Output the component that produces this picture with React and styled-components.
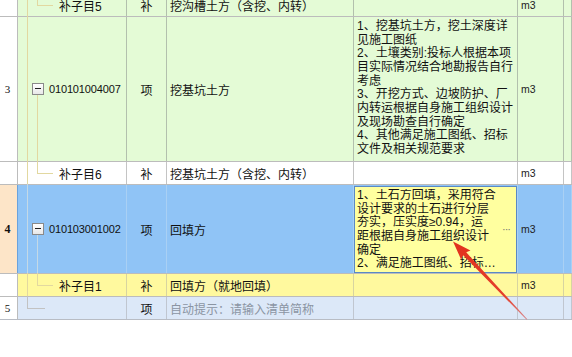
import React from "react";
import styled, { createGlobalStyle, css } from "styled-components";

const Global = createGlobalStyle`
  html, body { margin: 0; padding: 0; background: #ffffff; overflow: hidden; }
  body { width: 572px; height: 357px; }
`;

const COLS = "18px 109px 40px 187px 164px 46px 8px";

const palette = {
  green: { bg: "#e4fbd6", line: "#b2c0ad" },
  white: { bg: "#ffffff", line: "#c4c4c4" },
  blue: { bg: "#90c4f6", line: "#a9d0f4" },
  yellow: { bg: "#fff99e", line: "#d8d4a0" },
  pale: { bg: "#dce8f8", line: "#c0c6d0" },
};

const Page = styled.div`
  position: relative;
  width: 572px;
  height: 357px;
  overflow: hidden;
  font-family: "Liberation Sans", "Noto Sans CJK SC", sans-serif;
  font-size: 12px;
  color: #111;
`;

const Table = styled.div`
  display: flex;
  flex-direction: column;
  margin-top: -6px;
`;

const Row = styled.div`
  display: grid;
  grid-template-columns: ${COLS};
  height: ${(p) => p.$h}px;
  box-sizing: border-box;
  border-bottom: 1px solid ${(p) => (p.$tone === "pale" ? "#b8bcc4" : "#bcbcbc")};
  background: ${(p) => palette[p.$tone].bg};
`;

const Cell = styled.div`
  position: relative;
  box-sizing: border-box;
  border-right: 1px solid ${(p) => palette[p.$tone].line};
  display: flex;
  align-items: center;
  min-width: 0;
  white-space: nowrap;
`;

const NumCell = styled(Cell)`
  justify-content: center;
  background: ${(p) => (p.$peach ? "#fde5c8" : "#ffffff")};
  border-right: 1px solid ${(p) => (p.$peach ? "#6aa2dc" : "#bcbcbc")};
  font-weight: ${(p) => (p.$bold ? 700 : 400)};
  font-family: "Liberation Serif", "Noto Sans CJK SC", serif;
  font-size: ${(p) => (p.$bold ? "12px" : "11px")};
  padding-right: 2px;
`;

const CodeCell = styled(Cell)`
  padding-left: ${(p) => (p.$leaf ? 41 : 31)}px;
`;

const CodeText = styled.span`
  font-family: "Liberation Sans", sans-serif;
  font-size: 11px;
  letter-spacing: -0.15px;
`;

const TypeCell = styled(Cell)`
  justify-content: center;
`;

const NameCell = styled(Cell)`
  padding-left: 3px;
  color: ${(p) => (p.$hint ? "#8b95a3" : "#111")};
`;

const FeatureCell = styled(Cell)`
  align-items: flex-start;
  padding: 3px 0 0 3px;
`;

const Lines = styled.div`
  display: flex;
  flex-direction: column;
  line-height: 13.67px;
  font-size: 12px;
`;

const Line = styled.span`
  display: block;
  white-space: nowrap;
`;

const EditBox = styled.div`
  box-sizing: border-box;
  margin: 1px 0 0 0;
  height: calc(100% - 1px);
  width: 100%;
  background: #ffff9f;
  border: 1px solid #5a89c4;
  display: flex;
  align-items: stretch;
  padding: 2px 0 0 2px;
`;

const EditText = styled(Lines)`
  flex: 1;
  overflow: hidden;
`;

const Dots = styled.span`
  display: flex;
  align-items: center;
  padding: 0 6px 4px 2px;
  color: #777;
  font-size: 11px;
  letter-spacing: -1px;
`;

const UnitCell = styled(Cell)`
  padding-left: 3px;
  font-family: "Liberation Sans", sans-serif;
  font-size: 10.5px;
  color: #222;
`;

/* tree connectors drawn over the code cell */
const treeColor = (tone) =>
  tone === "blue" ? "#c4d9e6" : tone === "pale" ? "#c2c2c2" : "#e2d8a0";

const OuterLine = styled.span`
  position: absolute;
  left: 9px;
  width: 1px;
  top: -1px;
  bottom: ${(p) => (p.$half ? "50%" : "-1px")};
  background: ${(p) => treeColor(p.$tone)};
`;

const InnerLine = styled.span`
  position: absolute;
  left: 19px;
  width: 1px;
  background: ${(p) => treeColor(p.$tone)};
  ${(p) =>
    p.$fromBox
      ? css`
          top: calc(50% + 6px);
          bottom: -1px;
        `
      : css`
          top: -1px;
          bottom: 50%;
        `}
`;

const Elbow = styled.span`
  position: absolute;
  left: ${(p) => (p.$outer ? 9 : 19)}px;
  width: ${(p) => (p.$outer ? 18 : 16)}px;
  top: 50%;
  height: 1px;
  background: ${(p) => treeColor(p.$tone)};
`;

const ExpandBox = styled.span`
  position: absolute;
  left: 14px;
  top: 50%;
  transform: translateY(-50%);
  width: 12px;
  height: 12px;
  box-sizing: border-box;
  border: 1px solid #8a8a8a;
  background: linear-gradient(#ffffff, #e8e8e8);
  &::after {
    content: "";
    position: absolute;
    left: 2px;
    right: 2px;
    top: 4px;
    height: 1px;
    background: #222;
  }
`;

const ArrowLayer = styled.svg`
  position: absolute;
  left: 0;
  top: 0;
  pointer-events: none;
`;

const rows = [
  {
    h: 23,
    tone: "green",
    code: "补子目5",
    leaf: true,
    type: "补",
    name: "挖沟槽土方（含挖、内转）",
    unit: "m3",
  },
  {
    h: 145,
    tone: "green",
    num: "3",
    code: "010101004007",
    type: "项",
    name: "挖基坑土方",
    features: [
      "1、挖基坑土方，挖土深度详",
      "见施工图纸",
      "2、土壤类别:投标人根据本项",
      "目实际情况结合地勘报告自行",
      "考虑",
      "3、开挖方式、边坡防护、厂",
      "内转运根据自身施工组织设计",
      "及现场勘查自行确定",
      "4、其他满足施工图纸、招标",
      "文件及相关规范要求",
    ],
    unit: "m3",
  },
  {
    h: 23,
    tone: "white",
    code: "补子目6",
    leaf: true,
    type: "补",
    name: "挖基坑土方（含挖、内转）",
    unit: "m3",
  },
  {
    h: 89,
    tone: "blue",
    num: "4",
    current: true,
    code: "010103001002",
    type: "项",
    name: "回填方",
    editing: [
      "1、土石方回填，采用符合",
      "设计要求的土石进行分层",
      "夯实，压实度≥0.94，运",
      "距根据自身施工组织设计",
      "确定",
      "2、满足施工图纸、招标…",
    ],
    unit: "m3",
  },
  {
    h: 23,
    tone: "yellow",
    code: "补子目1",
    leaf: true,
    type: "补",
    name: "回填方（就地回填）",
    unit: "m3",
  },
  {
    h: 23,
    tone: "pale",
    num: "5",
    end: true,
    type: "项",
    name: "自动提示：请输入清单简称",
    hint: true,
    unit: "",
  },
];

function Tree({ row }) {
  const t = row.tone;
  if (row.end) {
    return (
      <>
        <OuterLine $tone={t} $half />
        <Elbow $tone={t} $outer />
      </>
    );
  }
  return (
    <>
      <OuterLine $tone={t} />
      {row.leaf ? (
        <>
          <InnerLine $tone={t} />
          <Elbow $tone={t} />
        </>
      ) : (
        <>
          <InnerLine $tone={t} $fromBox />
          <ExpandBox />
        </>
      )}
    </>
  );
}

function Arrow() {
  const T = [453, 241.5];
  const u = [0.69, 0.724];
  const p = [-0.724, 0.69];
  const add = (a, b, k) => [a[0] + b[0] * k, a[1] + b[1] * k];
  const B = add(T, u, 17);
  const W1 = add(add(B, p, 6.5), u, 1.5);
  const W2 = add(add(B, p, -6.5), u, 1.5);
  const S1 = add(B, p, 2.1);
  const S2 = add(B, p, -2.1);
  const C = [527, 319.5];
  const C1 = add(C, p, 0.5);
  const C2 = add(C, p, -0.5);
  const pts = [T, W2, S2, C2, C1, S1, W1].map((q) => q.join(",")).join(" ");
  return (
    <ArrowLayer width="572" height="357" viewBox="0 0 572 357">
      <defs>
        <linearGradient id="ag" x1="453" y1="241" x2="527" y2="320" gradientUnits="userSpaceOnUse">
          <stop offset="0" stopColor="#e2301c" />
          <stop offset="0.7" stopColor="#e4402c" />
          <stop offset="1" stopColor="#d98a90" />
        </linearGradient>
      </defs>
      <polygon points={pts} fill="url(#ag)" />
    </ArrowLayer>
  );
}

export default function App() {
  return (
    <>
      <Global />
      <Page>
        <Table>
          {rows.map((r, i) => (
            <Row key={i} $h={r.h} $tone={r.tone}>
              <NumCell $tone={r.tone} $peach={r.current} $bold={r.current}>
                {r.num || ""}
              </NumCell>
              <CodeCell $tone={r.tone} $leaf={r.leaf}>
                <Tree row={r} />
                {r.leaf ? r.code : <CodeText>{r.code}</CodeText>}
              </CodeCell>
              <TypeCell $tone={r.tone}>{r.type}</TypeCell>
              <NameCell $tone={r.tone} $hint={r.hint}>
                {r.name}
              </NameCell>
              {r.editing ? (
                <FeatureCell $tone={r.tone} style={{ padding: 0 }}>
                  <EditBox>
                    <EditText>
                      {r.editing.map((l, k) => (
                        <Line key={k}>{l}</Line>
                      ))}
                    </EditText>
                    <Dots>···</Dots>
                  </EditBox>
                </FeatureCell>
              ) : (
                <FeatureCell $tone={r.tone}>
                  {r.features && (
                    <Lines>
                      {r.features.map((l, k) => (
                        <Line key={k}>{l}</Line>
                      ))}
                    </Lines>
                  )}
                </FeatureCell>
              )}
              <UnitCell $tone={r.tone}>{r.unit}</UnitCell>
              <Cell $tone={r.tone} />
            </Row>
          ))}
        </Table>
        <Arrow />
      </Page>
    </>
  );
}
